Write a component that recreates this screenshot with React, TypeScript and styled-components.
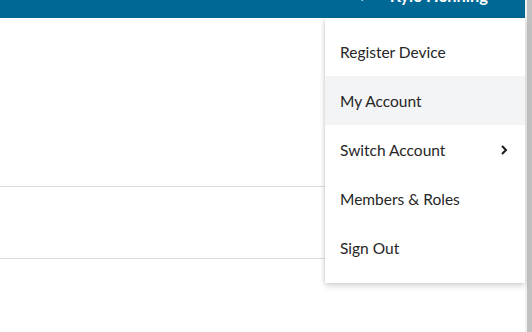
import { createGlobalStyle } from 'styled-components'
import styled from 'styled-components'
import type { FC } from 'react'

const GlobalStyle = createGlobalStyle`
  html, body {
    margin: 0;
    padding: 0;
    background: #ffffff;
    font-family: Lato, "Open Sans", sans-serif;
    overflow: hidden;
  }
`

const Page = styled.div`
  display: flex;
  width: 532px;
  height: 332px;
`

const Main = styled.div`
  position: relative;
  flex: 1;
  display: flex;
  flex-direction: column;
`

const Header = styled.div`
  height: 18px;
  background: #006894;
  overflow: hidden;
  display: flex;
  justify-content: flex-end;
  padding-right: 37px;
`

const UserBlock = styled.div`
  display: flex;
  align-items: center;
  gap: 26px;
  margin-top: -14px;
  height: 20px;
  color: #ffffff;
  font-weight: 700;
  font-size: 16.5px;
`

const Body = styled.div`
  flex: 1;
  display: flex;
  flex-direction: column;
  padding-top: 168px;
`

const Row = styled.div<{ $h: number }>`
  height: ${(p) => p.$h}px;
  border-top: 1px solid #dcdcdc;
`

const Menu = styled.div`
  position: absolute;
  top: 18px;
  right: 0;
  width: 200px;
  padding: 9px 0 11px;
  background: #ffffff;
  box-shadow: 0 3px 6px rgba(0, 0, 0, 0.16), -1px 0 3px rgba(0, 0, 0, 0.08);
`

const Item = styled.div<{ $active?: boolean }>`
  height: 49px;
  display: flex;
  align-items: center;
  justify-content: space-between;
  padding: 0 16px 0 15px;
  font-size: 15.5px;
  color: #262626;
  background: ${(p) => (p.$active ? '#f3f4f5' : 'transparent')};
`

const Scrollbar = styled.div`
  width: 7px;
  background: #f1f1f1;
  display: flex;
  justify-content: flex-end;
`

const Thumb = styled.div`
  width: 5px;
  background: #c1c1c1;
`

const Chevron: FC = () => (
  <svg width="10" height="12" viewBox="0 0 10 12" fill="none">
    <path d="M3 2 L7 6 L3 10" stroke="#1a1a1a" strokeWidth="2" />
  </svg>
)

const items = ['Register Device', 'My Account', 'Switch Account', 'Members & Roles', 'Sign Out']

export default function App() {
  return (
    <>
      <GlobalStyle />
      <Page>
        <Main>
          <Header>
            <UserBlock>
              <span>‹</span>
              <span>Kyle Henning</span>
            </UserBlock>
          </Header>
          <Body>
            <Row $h={71} />
            <Row $h={72} />
          </Body>
          <Menu>
            {items.map((label) => (
              <Item key={label} $active={label === 'My Account'}>
                <span>{label}</span>
                {label === 'Switch Account' && <Chevron />}
              </Item>
            ))}
          </Menu>
        </Main>
        <Scrollbar>
          <Thumb />
        </Scrollbar>
      </Page>
    </>
  )
}
